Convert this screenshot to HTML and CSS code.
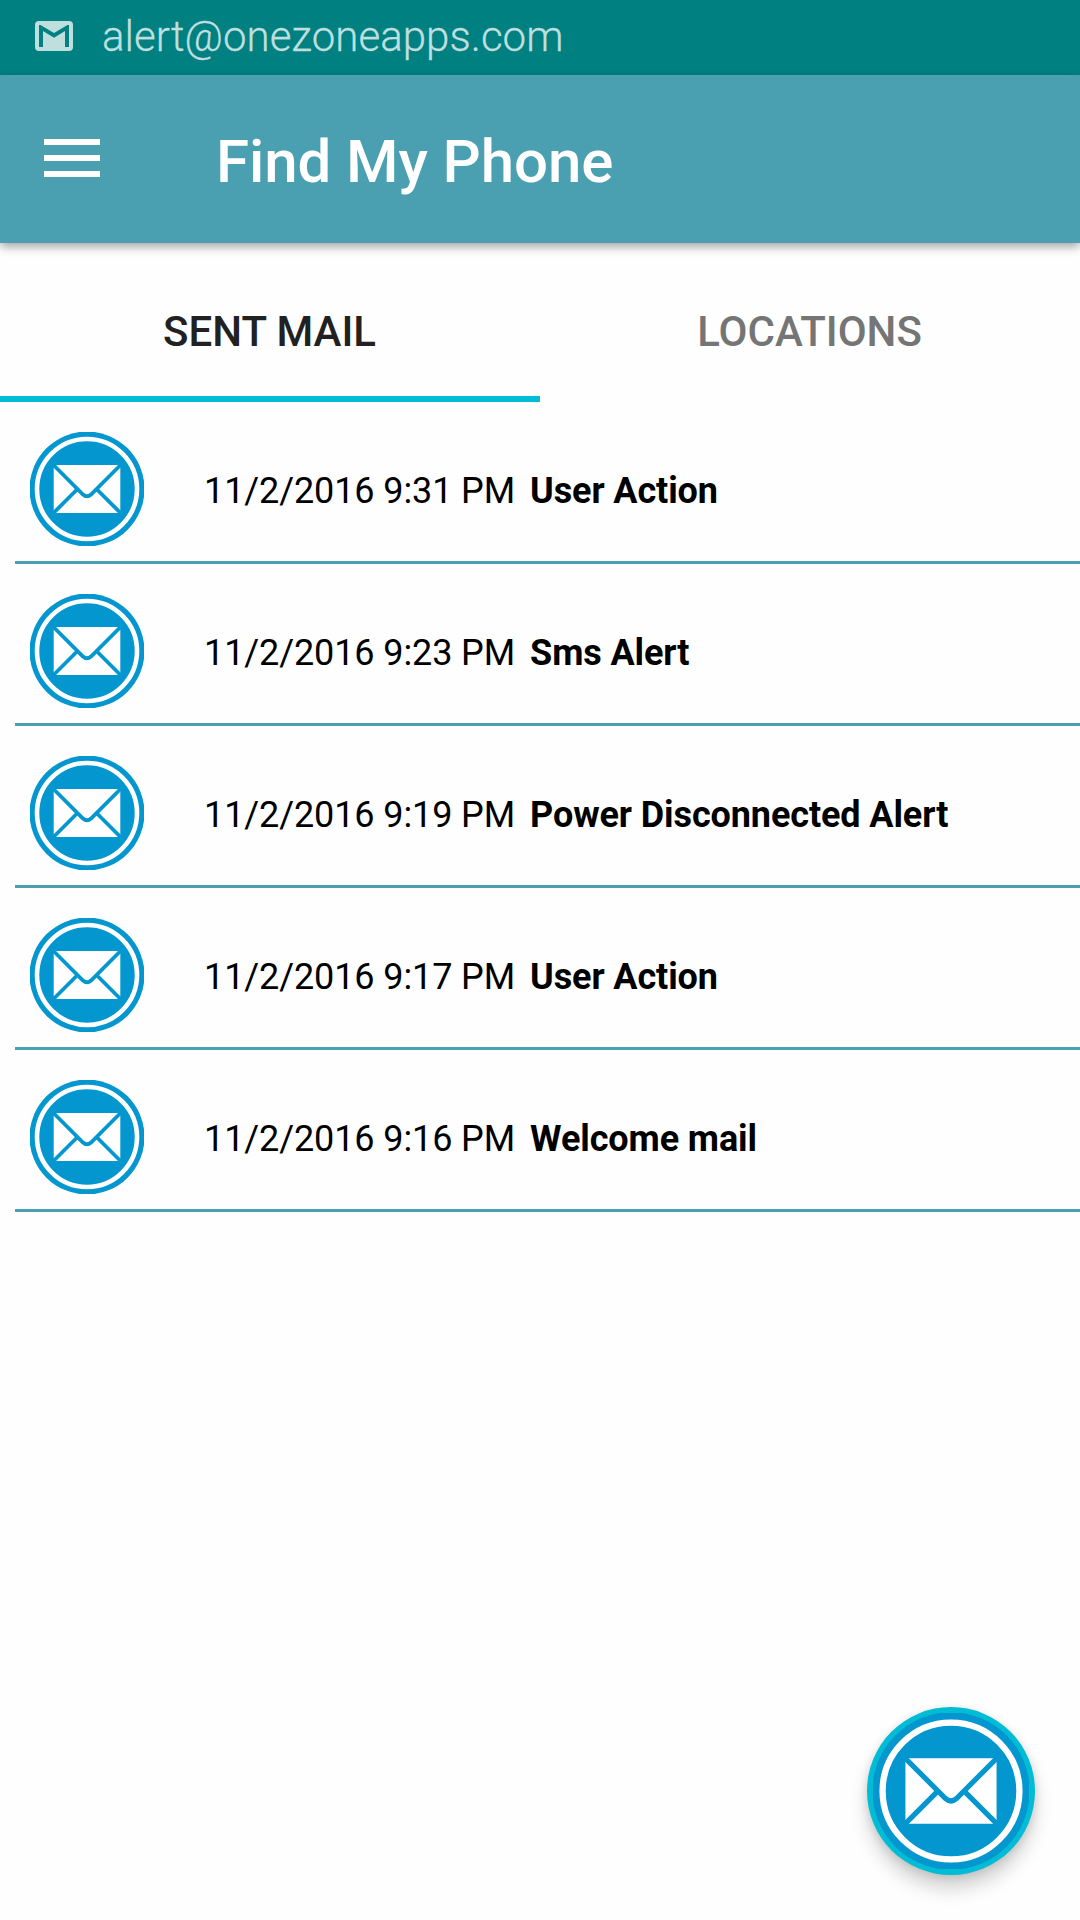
FILE: index.html
```html
<!DOCTYPE html>
<html lang="en">
<head>
  <meta charset="UTF-8">
  <title>Find My Phone</title>
  <link rel="stylesheet" href="styles.css">
</head>
<body>
  <svg class="defs">
    <symbol id="mail" viewBox="0 0 114 114">
      <circle cx="57" cy="57" r="57.5" fill="#0497cf"/>
      <circle cx="57" cy="57" r="50" fill="none" stroke="#fff" stroke-width="4.6"/>
      <rect x="23.7" y="33" width="66.6" height="48" rx="1" fill="#fff"/>
      <path d="M22 31.500 L53 62.500 Q57 66 61 62.500 L92 31.500 M22 82.500 L47 57.500 M92 82.500 L67 57.500" fill="none" stroke="#0497cf" stroke-width="3.8"/>
    </symbol>
  </svg>

  <div class="status">
    <svg class="gmail" viewBox="0 0 38 30">
      <path fill-rule="evenodd" d="M4 0 H34 Q38 0 38 4 V26 Q38 30 34 30 H4 Q0 30 0 26 V4 Q0 0 4 0 Z M4 4 V26 H8 V10 L19 16.800 L30 10 V26 H34 V4 H32.500 L19 12 L5.500 4 Z" fill="#bfdfdf"/>
    </svg>
    <span>alert@onezoneapps.com</span>
  </div>

  <header class="toolbar">
    <div class="menu"><i></i><i></i><i></i></div>
    <h1>Find My Phone</h1>
  </header>

  <nav class="tabs">
    <a class="tab active">SENT MAIL</a>
    <a class="tab">LOCATIONS</a>
  </nav>

  <ul class="list">
    <li><svg class="icon"><use href="#mail"/></svg><span class="date">11/2/2016 9:31 PM</span><b>User Action</b></li>
    <li><svg class="icon"><use href="#mail"/></svg><span class="date">11/2/2016 9:23 PM</span><b>Sms Alert</b></li>
    <li><svg class="icon"><use href="#mail"/></svg><span class="date">11/2/2016 9:19 PM</span><b>Power Disconnected Alert</b></li>
    <li><svg class="icon"><use href="#mail"/></svg><span class="date">11/2/2016 9:17 PM</span><b>User Action</b></li>
    <li><svg class="icon"><use href="#mail"/></svg><span class="date">11/2/2016 9:16 PM</span><b>Welcome mail</b></li>
  </ul>

  <div class="fab"><svg><use href="#mail"/></svg></div>
</body>
</html>
```
FILE: styles.css
```css
* { box-sizing: border-box; }
body {
  margin: 0; height: 1920px; overflow: hidden;
  background: #fefefe; color: #000;
  font-family: Roboto, sans-serif;
}
.defs { display: none; }

.status {
  display: flex; align-items: center;
  height: 75px; padding-left: 35px;
  background: #008080; color: #bfdfdf;
  font-size: 42px; font-weight: 350; letter-spacing: 0.05px;
  -webkit-text-stroke: 0.3px #bfdfdf;
}
.gmail { width: 38px; height: 30px; margin: 0 29px 3px 0; }
.status span { padding-bottom: 2px; }

.toolbar {
  display: flex; align-items: center;
  height: 168px; padding-left: 44px;
  background: #4aa0b1; color: #fff;
  box-shadow: 0 4px 9px rgba(0,0,0,0.34);
}
.menu { display: flex; flex-direction: column; gap: 10px; width: 56px; margin-top: -2px; }
.menu i { height: 6px; background: #fff; }
h1 { margin: 5px 0 0 116px; font-size: 60px; font-weight: 500; letter-spacing: -0.08px; }

.tabs { display: flex; height: 159px; }
.tab {
  width: 50%; padding: 64px 1px 0 0; text-align: center;
  color: #757575; font-size: 42px; font-weight: 500;
}
.tab.active { color: #212121; border-bottom: 6px solid #00bcd4; }

.list { list-style: none; margin: 0 0 0 15px; padding: 0; }
.list li {
  display: flex; align-items: center;
  height: 162px; padding: 15px 0 0 15px;
  border-bottom: 3px solid #4aa0b1;
  font-size: 36px; letter-spacing: -0.1px;
}
.icon { width: 114px; height: 114px; margin: 0 60px 0 0; }
.date, .list b { padding-top: 3px; }
.date { margin-right: 15px; }

.fab {
  position: absolute; left: 867px; top: 1707px;
  width: 168px; height: 168px; padding: 6px;
  border-radius: 50%; background: #00bcd4;
  box-shadow: 0 14px 18px rgba(0,0,0,0.17), 0 2px 8px rgba(0,0,0,0.12);
}
.fab svg { display: block; width: 156px; height: 156px; }
```
